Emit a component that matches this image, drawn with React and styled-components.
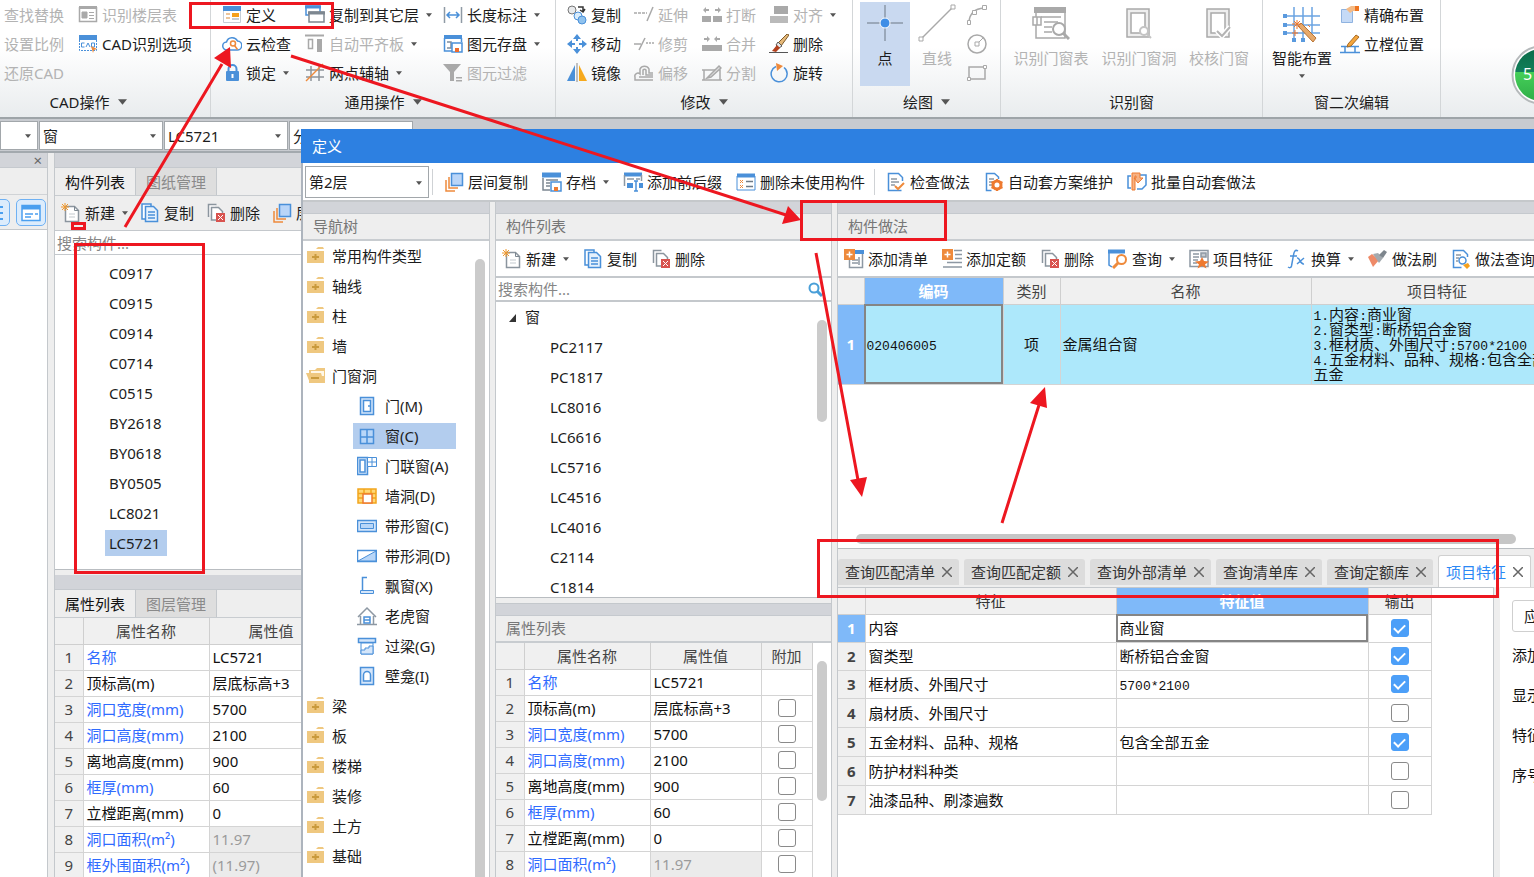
import React, { useState } from 'react';
import styled, { createGlobalStyle } from 'styled-components';

const azul = '#4a90d9';
const cinza = '#a9a9a9';
const laranja = '#ee8a3c';

/* ---------- icons, all drawn on a 20x20 grid ---------- */

const icons = {
    floorTable: <g fill="none" stroke={cinza}><path d="M1 2.500h18M1.500 2v14.500h17V2" strokeWidth="1.500"/><path d="M1 2.500h18" strokeWidth="3"/><path d="M4 7h5v6H4z" fill={cinza}/><path d="M11 7.500h5M11 10.500h5M11 13.500h5"/></g>,
    cad: <g><path d="M1 1h18v5H1z" fill={azul}/><path d="M1.500 6v10.500h17V6" fill="#fff" stroke={azul} strokeDasharray="2 1"/><path d="M6.500 9H3.500v4h3M8 13l2-4 2 4M13.500 9v4h3V9z" fill="none" stroke={azul}/><path d="M13 12l6 3-3 1-1 3z" fill={laranja}/></g>,
    define: <g><path d="M1.500 1.500h17v16h-17z" fill="#fff" stroke="#c5cdd6"/><path d="M1 1h18v5H1z" fill={azul}/><path d="M4 9h4M4 13h4" stroke="#e6b37b" strokeWidth="1.500"/><path d="M10 8h7v4h-7z" fill="#f5a01d"/><path d="M10 14h7" stroke="#c5cdd6" strokeWidth="2"/></g>,
    cloud: <g fill="none" stroke={azul} strokeWidth="1.500"><path d="M5 16a4 4 0 0 1-.5-8A6 6 0 0 1 15.500 7a4.500 4.500 0 0 1-.5 9z"/><g stroke={laranja}><circle cx="11" cy="9.500" r="2.500"/><path d="M12.500 11.500l3 4"/></g></g>,
    lock: <g><path d="M6.500 9V6a4 4 0 0 1 8 0v3" fill="none" stroke={azul} strokeWidth="2"/><rect x="4" y="8" width="13" height="10" rx="1" fill={azul}/><path d="M10.500 11v4" stroke="#fff" strokeWidth="2"/></g>,
    copyFloor: <g strokeWidth="1.500"><path d="M1 1h14v9H1z" fill="#fff" stroke={azul}/><path d="M0 2h16" stroke={azul} strokeWidth="3"/><path d="M4 7h15v10H4z" fill="#fff" stroke="#7d8790"/><path d="M3 8h17" stroke="#7d8790" strokeWidth="3"/></g>,
    align: <g fill="none" stroke={cinza}><path d="M0 1.500h19" strokeWidth="2"/><path d="M3.500 5.500h4v9h-4z" strokeWidth="1.500"/><path d="M12 5h5v13h-5z" fill={cinza} stroke="none"/></g>,
    axis: <g fill="none" stroke="#8d949a" strokeWidth="1.500"><path d="M6 3v15M14 3v15M1 7h18M1 14h18"/><path d="M1 18L18 1" stroke={laranja}/></g>,
    length: <g fill="none" stroke={azul} strokeWidth="1.500"><path d="M1.500 2v16M18.500 2v16" stroke="#8f9aa5"/><path d="M4 10h12M7 7l-3 3 3 3M13 7l3 3-3 3"/></g>,
    saveItem: <g fill="none" stroke={azul} strokeWidth="1.500"><path d="M1 3h18" strokeWidth="4"/><path d="M1.500 4v13H9M18.500 4v4"/><path d="M4 8h4v6H4" stroke="#7c8c9d"/><path d="M9 9h10v9H9z" fill="#fff"/><path d="M12 14h4v4h-4z" fill="#ee6b2c" stroke="none"/></g>,
    filter: <g fill={cinza}><path d="M0 1h18l-7 8v9H7V9z"/><path d="M13 14h6v1.500h-6zM13 17h6v1.500h-6z"/></g>,
    copy3: <g><circle cx="5" cy="5" r="4" fill="#e8eaec" stroke="#777"/><path d="M11 2h5v5M13 5l3 2 2-3" fill="none" stroke="#333" strokeWidth="1.500"/><circle cx="11" cy="11" r="4" fill="#d9ecfb" stroke={azul}/><circle cx="15" cy="15" r="4" fill="#8fc2ee" stroke={azul}/></g>,
    move: <g fill={azul}><path d="M10 0l4 5H6zM10 20l4-5H6zM0 10l5-4v8zM20 10l-5-4v8z"/><path d="M10 4v3M10 13v3M4 10h4M12 10h4" stroke={azul} strokeWidth="2"/></g>,
    mirror: <g><path d="M8 2v16H0z" fill={azul}/><path d="M12 2v16h8z" fill="#f6a91c"/><path d="M10 0v19" stroke="#888"/></g>,
    extend: <g stroke={cinza} strokeWidth="1.500"><path d="M0 8h13" strokeDasharray="3 1"/><path d="M13 16L19 2"/></g>,
    trim: <g stroke={cinza} strokeWidth="1.500"><path d="M0 10h7"/><path d="M5 16L11 4"/><path d="M12 9h8" strokeDasharray="2 1"/></g>,
    offset: <g fill="none" stroke={cinza} strokeWidth="1.500"><path d="M19 17H1v-3a3 3 0 0 1 5-3V6a5 5 0 0 1 9 0v4h4"/><path d="M19 14H5M9 12V7a2 2 0 0 1 3 0v5h7"/></g>,
    split: <g fill={cinza}><path d="M0 11h9v6H0zM11 11h9v6h-9z"/><path d="M1 5l3-3v2h3v2H4v2zM19 5l-3-3v2h-3v2h3v2z"/></g>,
    merge: <g fill={cinza}><path d="M0 11h10v6H0zM10 11h10v6H10z"/><path d="M8 5L5 2v2H2v2h3v2zM12 5l3-3v2h3v2h-3v2z"/></g>,
    divide: <g fill="none" stroke={cinza} strokeWidth="1.500"><path d="M2 7h16v10H2zM0 7h4M0 17h4M16 17h4"/><path d="M5 15L17 3l2 2L9 14z" fill="#ddd"/></g>,
    alignObj: <g fill={cinza}><path d="M5 1h14v8H5z"/><path d="M1 11h18v7H1z" opacity=".8"/></g>,
    brush: <g><path d="M20 1l-2-1L9 9l3 3z" fill="#e5b878" stroke="#7d5a2a"/><path d="M9 8l4 4-3 2-3-3z" fill="#e8e8e8" stroke="#555"/><path d="M8 11l3 3-4 4-4-1z" fill="#b3401d"/><path d="M0 18.500h19" stroke="#555"/></g>,
    rotate: <g fill="none" stroke={azul} strokeWidth="1.500"><path d="M7 3.500a8 8 0 1 0 8 1"/><path d="M7 0l7 3-6 5z" fill={laranja} stroke="none"/></g>,
    exact: <g><path d="M1.500 4.500h11v13h-11z" fill="#c5daf6" stroke="#8fb3e0"/><path d="M6 4l5-3h8v5h-6l-3 2z" fill="#f4bb86"/><path d="M15 1h4v5h-4z" fill="#ee7420"/></g>,
    frame: <g fill="none" stroke={azul} strokeWidth="1.500"><path d="M1 12.500h18M0 18.500h20M5 12v6M15 12v6"/><path d="M8 10L16 1l3 2-8 9-4 1z" fill="#f5a63c" stroke="#a76a24" strokeWidth="1"/></g>,
    newDoc: <g fill="none"><path d="M4.500 3.500h9l4 4v11h-13z" fill="#fff" stroke="#8b959e" strokeWidth="1.500"/><path d="M13.500 3.500v4h4" stroke="#7c8791"/><path d="M8 11h6M8 14h6" stroke="#c3c9ce"/><path d="M4 0v8M0 4h8M1 1l6 6M7 1L1 7" stroke="#f0982c"/></g>,
    copy: <g fill="#fff" stroke={azul} strokeWidth="1.500"><path d="M2 1h9v15H2z"/><path d="M5.500 3.500h8l4 4v11h-12z" fill="#e6f1fc"/><path d="M8 9h7M8 12h7M8 15h7"/></g>,
    del: <g fill="#fff"><path d="M2.500 14V1.500h8M5.500 17V4.500h7l4 4V17z" stroke="#8b959e" strokeWidth="1.500"/><path d="M10 10h9v9h-9z" fill="#d9534f"/><path d="M12 12l5 5M17 12l-5 5" stroke="#fff"/></g>,
    between: <g fill="none" strokeWidth="1.500"><path d="M7.500 1.500h11v12h-11z" fill="#b9d5f8" stroke={azul}/><path d="M5 5v11h9M2 8v11h9" stroke={laranja}/></g>,
    archive: <g fill="none" stroke={azul} strokeWidth="1.500"><path d="M0 3h19" strokeWidth="5"/><path d="M1 6v12h7M4 8h12M4 11h4M4 14h4" stroke="#7c8791"/><path d="M9 10h10v9H9z" fill="#fff"/><path d="M12 15h4v4h-4z" fill="#ee7a30" stroke="none"/></g>,
    suffix: <g fill="none" stroke={azul} strokeWidth="1.500"><path d="M1 2.500h18" strokeWidth="4"/><path d="M1.500 3v11M18.500 3v6M4 7h7M13 7h4" stroke="#8d98a3"/><path d="M4 11h6v5H4zM16 11h4v5h-4z" fill={azul} stroke="none"/><path d="M13 9v10M11 9h4M11 19h4"/></g>,
    unused: <g fill="none" stroke={azul} strokeWidth="1.500"><path d="M1 3.500h18" strokeWidth="4"/><path d="M1 4v14h18V4" strokeWidth="1"/><path d="M4 8l3 3M7 8l-3 3M4 13l3 3M7 13l-3 3" stroke={laranja} strokeWidth="1"/><path d="M10 9.500h7M10 14.500h7" stroke="#6d7a86"/></g>,
    check: <g fill="none" stroke={azul} strokeWidth="1.500"><path d="M16.500 9V5.500l-4-4h-10v17h13"/><path d="M5 7h6M5 10h8M5 13h4" stroke="#8d98a3"/><path d="M9 14l3 3 6-6" stroke={laranja} strokeWidth="2"/></g>,
    plan: <g fill="none" stroke={azul} strokeWidth="1.500"><path d="M14.500 7V5l-4-3.500h-8v17h5"/><path d="M5 7h5M5 10h4M5 13h3" stroke="#8d98a3"/><circle cx="13" cy="13" r="4" stroke="#ee7a30" strokeWidth="3"/><path d="M13 7v2M13 17v2M7.500 10l2 1M16.500 15l2 1M7.500 16l2-1M16.500 11l2-1" stroke="#ee7a30" strokeWidth="2"/></g>,
    batch: <g fill="none"><path d="M4 4H1v12h3M13 3h6v10l-4 4h-5" stroke={azul} strokeWidth="1.500"/><path d="M5 1h8v5h3l-5 5-4-5h2V4H8v14H5z" fill="#f6b183" stroke="#ee7a30"/></g>,
    addList: <g fill="none"><path d="M10 1h10v4H10z" fill={azul}/><path d="M18.500 5v13.500h-13V11M8 11h6M8 14h6M15 8v8" stroke="#8d98a3" strokeWidth="1.500"/><path d="M0 0h11v11H0z" fill={laranja}/><path d="M5.500 2.500v6M2.500 5.500h6" stroke="#fff" strokeWidth="1.500"/></g>,
    addQuota: <g fill="none"><path d="M12 1.500h8M13 5.500h7M13 9.500h7M5 13.500h15M1 18h19" stroke="#8d98a3" strokeWidth="1.500"/><path d="M0 0h11v11H0z" fill={laranja}/><path d="M5.500 2.500v6M2.500 5.500h6" stroke="#fff" strokeWidth="1.500"/></g>,
    query: <g fill="none" stroke={azul}><path d="M0 2.500h17" strokeWidth="4"/><path d="M1 4v12l3 2" strokeWidth="1.500"/><circle cx="13.500" cy="10.500" r="4.500" fill="#fff" stroke={laranja} strokeWidth="2"/><path d="M10 14l-5 5" stroke={laranja} strokeWidth="3"/></g>,
    feature: <g fill="none" stroke="#8d98a3" strokeWidth="1.500"><path d="M1 1.500h18v16H1z"/><path d="M4 5h6M4 8h6M4 11h5M4 14h4"/><path d="M12 4h5v4h-5z" fill="#c3c9ce"/><path d="M13 8l2 4 5 .500-4 3 1.500 4-4.500-2.500-4.500 2.500L10 15.500l-4-3 5-.5z" fill="#ee7a30" stroke="none"/></g>,
    fx: <g fill="none" stroke={azul} strokeWidth="1.500"><path d="M11 2c-3-2-4 1-4.500 4L4.500 17c-.5 2-2 2-3.500 1M3 7h7M10 9c3-1 3 7 7 6M17 9l-7 6"/></g>,
    paint: <g><path d="M0 8l4-3 7 6-6 7z" fill="#ee8a68"/><path d="M5 5l5-1 5 5-4 5z" fill="#a3a9ae"/><path d="M11 6l5-5 3 2-4 6z" fill="#7e868d"/></g>,
    queryDoc: <g fill="none" stroke={azul} strokeWidth="1.500"><path d="M16.500 8V5.500l-4-4h-10v17h8"/><path d="M5 6h5M5 9h3M5 12h2" stroke="#8d98a3"/><circle cx="11.500" cy="11.500" r="3.500"/><path d="M12 16l5-2 2 3-3 3z" fill="#f5a01d" stroke="none"/></g>,
    folder: <g><path d="M1 5h17v12H1z" fill="#efc880"/><path d="M10 3l2-2h5l1 2z" fill="#efc880"/><path d="M9.500 8v6M6 11h7" stroke="#c99a3c" strokeWidth="2"/></g>,
    folderOpen: <g><path d="M3 4h6l2-2h8v15H3z" fill="#efc880"/><path d="M5 5h13v5H5z" fill="#fff7e6"/><path d="M0 7h15l3 10H4z" fill="#efc880"/><path d="M5 12h8" stroke="#c99a3c" strokeWidth="2"/></g>,
    door: <g fill="#d5e6fa" stroke={azul} strokeWidth="1.500"><path d="M3.500 1.500h13v17h-13z"/><path d="M6.500 4.500h7v11h-7z" fill="#fff"/><path d="M12 9v2"/></g>,
    window: <g fill="#b8d6f8" stroke={azul} strokeWidth="1.500"><path d="M3.500 3.500h13v14h-13zM10 4v13M4 11h12"/></g>,
    doorWindow: <g fill="#d5e6fa" stroke={azul} strokeWidth="1.500"><path d="M.5 1.500h10v17H.5z"/><path d="M3 4h5v12H3z" fill="#fff"/><path d="M10.500 1.500h9v9h-9zM15 2v8M11 6h8" fill="#fff" strokeWidth="1"/></g>,
    hole: <g stroke="#f2a51d" strokeWidth="1.500"><path d="M1 3h18v14H1z" fill="#ffd877"/><path d="M1 7.500h18M1 12h18M7 3v4M14 3v4"/><path d="M6 8h9v9H6z" fill="#fff" stroke="#ee7a30"/></g>,
    stripWin: <g fill="#d5e6fa" stroke={azul}><path d="M.5 4.500h19v11H.5z" strokeWidth="1.500"/><path d="M3.500 7.500h13v5h-13z" fill="#b8d6f8"/></g>,
    stripHole: <g stroke={azul}><path d="M.5 4.500h19v11H.5z" fill="#fff" strokeWidth="1.500"/><path d="M1 15L19 5v10z" fill="#b8d6f8"/></g>,
    bay: <g fill="#d5e6fa" stroke={azul}><path d="M10 1.500H5.500v13" fill="none" strokeWidth="1.500"/><path d="M3.500 14.500h13v3h-13z"/></g>,
    dormer: <g fill="none" stroke="#8d98a3" strokeWidth="1.500"><path d="M1 11l9-9 9 9M3.500 10v8M16.500 10v8M0 18.500h20"/><path d="M7 11h6v6H7zM7 14h6" stroke={azul}/></g>,
    lintel: <g fill="#d5e6fa" stroke={azul}><path d="M1.500 2.500h17v4h-17z" strokeWidth="1.500"/><path d="M4 7h12v11H4z" fill="#fff"/><path d="M4 18v-4h4v-2h4v-2h4v8z"/></g>,
    niche: <g fill="#d5e6fa" stroke={azul} strokeWidth="1.500"><path d="M3.500 1.500h13v17h-13z"/><path d="M6.500 15V9a3.500 3.500 0 0 1 7 0v6z" fill="#fff"/></g>,
    search: <g fill="none" stroke="#4a9fd8" strokeWidth="2"><circle cx="8" cy="9" r="4.500"/><path d="M11 12l5 5" strokeWidth="3"/></g>,
    list: <g stroke="#4a9fef" strokeWidth="2"><path d="M2 4h16M2 10h16M2 16h16"/></g>,
    panel: <g fill="none" stroke="#4a9fef" strokeWidth="1.500"><path d="M1 2.500h18v15H1z" fill="#fff"/><path d="M1 4.500h18" strokeWidth="4"/><path d="M4 11h8M4 14h6M14 11h3"/></g>,
};

function Icon({ name }){
    return <Svg20 viewBox="0 0 20 20" aria-hidden="true">{icons[name]}</Svg20>;
}

function Seta({ big }){
    return <Caret $big={big} viewBox="0 0 8 5" aria-hidden="true"><path d="M0 0h8L4 5z" fill="#555"/></Caret>;
}

/* ---------- data ---------- */

const ribbonGroups = [
    { w: 211, pad: 4, label: 'CAD操作', arrow: true, end: 34, cols: [
        { items: [[null, '查找替换', true], [null, '设置比例', true], [null, '还原CAD', true]] },
        { gap: 14, items: [['floorTable', '识别楼层表', true], ['cad', 'CAD识别选项']] },
    ] },
    { w: 345, pad: 11, label: '通用操作', arrow: true, cols: [
        { items: [['define', '定义'], ['cloud', '云检查'], ['lock', '锁定', false, true]] },
        { gap: 14, items: [['copyFloor', '复制到其它层', false, true], ['align', '自动平齐板', true, true], ['axis', '两点辅轴', false, true]] },
        { gap: 11, items: [['length', '长度标注', false, true], ['saveItem', '图元存盘', false, true], ['filter', '图元过滤', true]] },
    ] },
    { w: 297, pad: 11, label: '修改', arrow: true, cols: [
        { items: [['copy3', '复制'], ['move', '移动'], ['mirror', '镜像']] },
        { gap: 13, items: [['extend', '延伸', true], ['trim', '修剪', true], ['offset', '偏移', true]] },
        { gap: 14, items: [['split', '打断', true], ['merge', '合并', true], ['divide', '分割', true]] },
        { gap: 13, items: [['alignObj', '对齐', true, true], ['brush', '删除'], ['rotate', '旋转']] },
    ] },
];

const leftItems = ['C0917', 'C0915', 'C0914', 'C0714', 'C0515', 'BY2618', 'BY0618', 'BY0505', 'LC8021', 'LC5721'];
const midItems = ['PC2117', 'PC1817', 'LC8016', 'LC6616', 'LC5716', 'LC4516', 'LC4016', 'C2114', 'C1814'];

const props = [
    ['名称', 'LC5721', true],
    ['顶标高(m)', '层底标高+3', false],
    ['洞口宽度(mm)', '5700', true],
    ['洞口高度(mm)', '2100', true],
    ['离地高度(mm)', '900', false],
    ['框厚(mm)', '60', true],
    ['立樘距离(mm)', '0', false],
    ['洞口面积(m²)', '11.97', true, true],
    ['框外围面积(m²)', '(11.97)', true, true],
];

const tree = [
    ['folder', '常用构件类型'], ['folder', '轴线'], ['folder', '柱'], ['folder', '墙'], ['folderOpen', '门窗洞'],
    ['door', '门(M)', true], ['window', '窗(C)', true], ['doorWindow', '门联窗(A)', true], ['hole', '墙洞(D)', true],
    ['stripWin', '带形窗(C)', true], ['stripHole', '带形洞(D)', true], ['bay', '飘窗(X)', true], ['dormer', '老虎窗', true],
    ['lintel', '过梁(G)', true], ['niche', '壁龛(I)', true],
    ['folder', '梁'], ['folder', '板'], ['folder', '楼梯'], ['folder', '装修'], ['folder', '土方'], ['folder', '基础'],
];

const features = [
    ['内容', '商业窗', true],
    ['窗类型', '断桥铝合金窗', true],
    ['框材质、外围尺寸', '5700*2100', true],
    ['扇材质、外围尺寸', '', false],
    ['五金材料、品种、规格', '包含全部五金', true],
    ['防护材料种类', '', false],
    ['油漆品种、刷漆遍数', '', false],
];

const queryTabs = ['查询匹配清单', '查询匹配定额', '查询外部清单', '查询清单库', '查询定额库'];

/* ---------- parts ---------- */

function Tool({ icon, text, arrow, off, tight }){
    return (
        <ToolButton type="button" disabled={off} $tight={tight}>
            {icon && <Icon name={icon} />}
            <span>{text}</span>
            {arrow && <Seta />}
        </ToolButton>
    );
}

function Ribbon(){
    return (
        <RibbonBar>
            {ribbonGroups.map(g => (
                <Group key={g.label} $w={g.w}>
                    <GroupBody $pad={g.pad}>
                        {g.cols.map((c, i) => (
                            <Column key={i} $gap={c.gap}>
                                {c.items.map(([icon, text, off, arrow]) => (
                                    <Tool key={text} icon={icon} text={text} off={off} arrow={arrow} tight />
                                ))}
                            </Column>
                        ))}
                    </GroupBody>
                    <GroupLabel $end={g.end}>{g.label}{g.arrow && <Seta big />}</GroupLabel>
                </Group>
            ))}
            <Group $w={148}>
                <GroupBody $pad={7}>
                    <BigButton type="button" $on $w={50}>
                        <BigSvg viewBox="0 0 38 38">
                            <path d="M19 1v36M1 19h36" stroke="#8b98a8" strokeWidth="1.500"/>
                            <circle cx="19" cy="19" r="5" fill="#3f8ee6" stroke="#fff"/>
                        </BigSvg>
                        点
                    </BigButton>
                    <BigButton type="button" disabled $w={54}>
                        <BigSvg viewBox="0 0 38 38">
                            <path d="M3 35L35 3" stroke={cinza} strokeWidth="1.500"/>
                            <path d="M1 33h4v4H1zM33 1h4v4h-4z" fill="#fff" stroke={cinza}/>
                        </BigSvg>
                        直线
                    </BigButton>
                    <Column $gap={3}>
                        <ToolButton type="button" disabled $tight aria-label="弧"><Svg20 viewBox="0 0 20 20"><path d="M2 17Q3 4 17 3" fill="none" stroke={cinza} strokeWidth="1.500"/><path d="M.5 15.500h3v4h-3zM5.500 5.500h4v4h-4zM15.500 .500h4v4h-4z" fill="#fff" stroke={cinza}/></Svg20></ToolButton>
                        <ToolButton type="button" disabled $tight aria-label="圆"><Svg20 viewBox="0 0 20 20"><circle cx="10" cy="10" r="9" fill="none" stroke={cinza} strokeWidth="1.500"/><path d="M8 8h4v4H8z" fill="#fff" stroke={cinza}/><path d="M12 8l4-4" stroke={cinza}/></Svg20></ToolButton>
                        <ToolButton type="button" disabled $tight aria-label="矩形"><Svg20 viewBox="0 0 20 20"><path d="M2 4h16v12H2z" fill="none" stroke={cinza} strokeWidth="1.500"/><path d="M.5 14.500h3v3h-3zM16.500 2.500h3v3h-3z" fill="#fff" stroke={cinza}/></Svg20></ToolButton>
                    </Column>
                </GroupBody>
                <GroupLabel>绘图<Seta big /></GroupLabel>
            </Group>
            <Group $w={262}>
                <GroupBody $pad={6}>
                    <BigButton type="button" disabled $w={88}>
                        <BigSvg viewBox="0 0 38 38">
                            <path d="M2 3h32v6H2z" fill={cinza}/>
                            <path d="M4 8v26h29V8M9 13h20M12 18h14M12 23h8M12 28h8" fill="none" stroke={cinza} strokeWidth="1.500"/>
                            <path d="M1 13h8v8H1zM5 13v8" fill="#fff" stroke={cinza} strokeWidth="1.500"/>
                            <circle cx="27" cy="25" r="6" fill="#fff" stroke={cinza} strokeWidth="2"/>
                            <path d="M31 29l6 6" stroke={cinza} strokeWidth="3"/>
                        </BigSvg>
                        识别门窗表
                    </BigButton>
                    <BigButton type="button" disabled $w={88}>
                        <BigSvg viewBox="0 0 38 38">
                            <path d="M7 5h22v28H7z" fill="#eee" stroke={cinza} strokeWidth="1.500"/>
                            <path d="M11 9h14v20H11z" fill="#fff" stroke={cinza} strokeWidth="1.500"/>
                            <circle cx="24" cy="27" r="4" fill="#fff" stroke="#c4c4c4" strokeWidth="2"/>
                            <path d="M27 30l4 4" stroke="#c4c4c4" strokeWidth="2"/>
                        </BigSvg>
                        识别门窗洞
                    </BigButton>
                    <BigButton type="button" disabled $w={72}>
                        <BigSvg viewBox="0 0 38 38">
                            <path d="M7 5h22v28H7z" fill="#eee" stroke={cinza} strokeWidth="1.500"/>
                            <path d="M11 9h14v20H11z" fill="#fff" stroke={cinza} strokeWidth="1.500"/>
                            <path d="M17 27l5 5 8-9" fill="none" stroke="#fff" strokeWidth="5"/>
                            <path d="M17 27l5 5 8-9" fill="none" stroke="#b4b4b4" strokeWidth="2"/>
                        </BigSvg>
                        校核门窗
                    </BigButton>
                </GroupBody>
                <GroupLabel>识别窗</GroupLabel>
            </Group>
            <Group $w={178}>
                <GroupBody $pad={5}>
                    <BigButton type="button" $w={68}>
                        <BigSvg viewBox="0 0 38 38">
                            <path d="M11 3v32M20 3v32M29 3v26M2 12h35M2 21h35M2 29h35" fill="none" stroke="#6ba4e2" strokeWidth="1.500"/>
                            <path d="M0 10h4v4H0zM0 19h4v4H0zM0 27h4v4H0zM9 34h4v4H9zM18 34h4v4h-4z" fill="#5a9ade"/>
                            <path d="M15 22l3-3 15 15-3 4z" fill="#e6a96b" stroke="#b87436"/>
                            <path d="M14 16v9M9 20h9M11 17l6 6M17 17l-6 6M12 26v6M9 29h6M25 21l2 2" stroke="#f0772b"/>
                        </BigSvg>
                        智能布置
                        <Seta />
                    </BigButton>
                    <Column $gap={4}>
                        <Tool icon="exact" text="精确布置" tight />
                        <Tool icon="frame" text="立樘位置" tight />
                    </Column>
                </GroupBody>
                <GroupLabel>窗二次编辑</GroupLabel>
            </Group>
        </RibbonBar>
    );
}

function PropTable({ extra, rows }){
    return (
        <Grade>
            <colgroup>
                <col width="28" />
                <col width="126" />
                <col width={extra ? 111 : 124} />
                {extra && <col width="51" />}
            </colgroup>
            <thead>
                <tr>
                    <th></th><th>属性名称</th><th>属性值</th>{extra && <th>附加</th>}
                </tr>
            </thead>
            <tbody>
                {rows.map(([nome, valor, link, ro], i) => (
                    <tr key={nome}>
                        <Num>{i + 1}</Num>
                        <Cell $blue={link}>{nome}</Cell>
                        <Cell $ro={ro}>{valor}</Cell>
                        {extra && <CheckCell>{i > 0 && <Check type="checkbox" aria-label={nome} />}</CheckCell>}
                    </tr>
                ))}
            </tbody>
        </Grade>
    );
}

function MainPanels(){
    return (
        <MainBody>
            <SidePane>
                <Strip><Close type="button" aria-label="关闭">×</Close></Strip>
                <SideHead />
                <SideTools>
                    <ViewButton type="button" aria-label="列表"><Icon name="list" /></ViewButton>
                    <ViewButton type="button" aria-label="面板"><Icon name="panel" /></ViewButton>
                </SideTools>
            </SidePane>
            <ListPane>
                <Strip />
                <PaneTabs>
                    <PaneTab type="button" $on>构件列表</PaneTab>
                    <PaneTab type="button">图纸管理</PaneTab>
                </PaneTabs>
                <Tools $gray>
                    <Tool icon="newDoc" text="新建" arrow />
                    <Tool icon="copy" text="复制" />
                    <Tool icon="del" text="删除" />
                    <Tool icon="between" text="层" />
                </Tools>
                <SearchBox><input type="text" placeholder="搜索构件..." aria-label="搜索构件" /></SearchBox>
                <CodeList $left={50}>
                    {leftItems.map(c => <li key={c}><Code $on={c === 'LC5721'}>{c}</Code></li>)}
                </CodeList>
                <Strip />
                <PaneTabs>
                    <PaneTab type="button" $on>属性列表</PaneTab>
                    <PaneTab type="button">图层管理</PaneTab>
                </PaneTabs>
                <PropTable rows={props} />
            </ListPane>
        </MainBody>
    );
}

function Features(){
    const [marks, setMarks] = useState(features.map(f => f[2]));

    function toggle(i){
        setMarks(marks.map((m, k) => (k === i ? !m : m)));
    }

    return (
        <FeatureTable>
            <colgroup>
                <col width="27" /><col width="251" /><col width="252" /><col width="63" />
            </colgroup>
            <thead>
                <tr><th></th><th>特征</th><HeadOn>特征值</HeadOn><th>输出</th></tr>
            </thead>
            <tbody>
                {features.map(([nome, valor], i) => (
                    <tr key={nome}>
                        <Num $bold $on={i === 0}>{i + 1}</Num>
                        <Cell>{nome}</Cell>
                        <Cell $focus={i === 0}>{valor.includes('*') ? <Mono>{valor}</Mono> : valor}</Cell>
                        <CheckCell><Check type="checkbox" aria-label={nome} checked={marks[i]} onChange={() => toggle(i)} /></CheckCell>
                    </tr>
                ))}
            </tbody>
        </FeatureTable>
    );
}

function DefineDialog(){
    return (
        <Dialog>
            <Title>定义</Title>
            <DialogTools>
                <Combo $w={124} $tall>
                    <select aria-label="楼层" defaultValue="第2层"><option>第2层</option></select>
                    <Seta />
                </Combo>
                <Divider />
                <Tool icon="between" text="层间复制" />
                <Tool icon="archive" text="存档" arrow />
                <Tool icon="suffix" text="添加前后缀" />
                <Tool icon="unused" text="删除未使用构件" />
                <Divider />
                <Tool icon="check" text="检查做法" />
                <Tool icon="plan" text="自动套方案维护" />
                <Tool icon="batch" text="批量自动套做法" />
            </DialogTools>
            <DialogBody>
                <Pane $w={187}>
                    <Strip $short />
                    <PaneHead>导航树</PaneHead>
                    <Scroller>
                        <Tree>
                            {tree.map(([icon, text, sub]) => (
                                <TreeRow key={text} $sub={sub} $on={text === '窗(C)'}>
                                    <span><Icon name={icon} />{text}</span>
                                </TreeRow>
                            ))}
                        </Tree>
                        <Track $top={18}><Thumb /></Track>
                    </Scroller>
                </Pane>
                <Pane $w={337}>
                    <Strip $short />
                    <PaneHead>构件列表</PaneHead>
                    <Tools>
                        <Tool icon="newDoc" text="新建" arrow />
                        <Tool icon="copy" text="复制" />
                        <Tool icon="del" text="删除" />
                    </Tools>
                    <SearchBox $boxed>
                        <input type="text" placeholder="搜索构件..." aria-label="搜索构件" />
                        <Icon name="search" />
                    </SearchBox>
                    <Scroller $h={296}>
                        <CodeList $left={50} $plain>
                            <li><Root><svg width="9" height="9" viewBox="0 0 9 9"><path d="M8 1v8H1z" fill="#333"/></svg>窗</Root></li>
                            {midItems.map(c => <li key={c}><Code>{c}</Code></li>)}
                        </CodeList>
                        <Track $top={18}><Thumb $h={102} /></Track>
                    </Scroller>
                    <LowerPane>
                        <Strip $short />
                        <PaneHead>属性列表</PaneHead>
                        <Scroller>
                            <PropTable extra rows={props.slice(0, 8)} />
                            <Track $top={18}><Thumb $h={140} /></Track>
                        </Scroller>
                    </LowerPane>
                </Pane>
                <WidePane>
                    <Strip $short />
                    <PaneHead>构件做法</PaneHead>
                    <Tools>
                        <Tool icon="addList" text="添加清单" />
                        <Tool icon="addQuota" text="添加定额" />
                        <Tool icon="del" text="删除" />
                        <Tool icon="query" text="查询" arrow />
                        <Tool icon="feature" text="项目特征" />
                        <Tool icon="fx" text="换算" arrow />
                        <Tool icon="paint" text="做法刷" />
                        <Tool icon="queryDoc" text="做法查询" />
                    </Tools>
                    <MethodArea>
                        <MethodTable>
                            <colgroup>
                                <col width="26" /><col width="139" /><col width="57" /><col width="251" /><col width="252" />
                            </colgroup>
                            <thead>
                                <tr><th></th><HeadOn>编码</HeadOn><th>类别</th><th>名称</th><th>项目特征</th></tr>
                            </thead>
                            <tbody>
                                <tr>
                                    <Num $bold $on>1</Num>
                                    <MethodCell $focus><Mono>020406005</Mono></MethodCell>
                                    <MethodCell $center>项</MethodCell>
                                    <MethodCell>金属组合窗</MethodCell>
                                    <MethodCell>
                                        <Mono>1.</Mono>内容<Mono>:</Mono>商业窗<br />
                                        <Mono>2.</Mono>窗类型<Mono>:</Mono>断桥铝合金窗<br />
                                        <Mono>3.</Mono>框材质、外围尺寸<Mono>:5700*2100</Mono><br />
                                        <Mono>4.</Mono>五金材料、品种、规格<Mono>:</Mono>包含全部<br />
                                        五金
                                    </MethodCell>
                                </tr>
                            </tbody>
                        </MethodTable>
                        <HThumb />
                    </MethodArea>
                    <Detail>
                        <QueryTabs>
                            {queryTabs.map(t => (
                                <QueryTab key={t} type="button">{t}<Xis /></QueryTab>
                            ))}
                            <QueryTab type="button" $on>项目特征<Xis /></QueryTab>
                        </QueryTabs>
                        <DetailBody>
                            <FeatureBox><Features /></FeatureBox>
                            <Options>
                                <OptionButton type="button">应</OptionButton>
                                <p>添加</p>
                                <p>显示</p>
                                <p>特征</p>
                                <p>序号</p>
                            </Options>
                        </DetailBody>
                    </Detail>
                </WidePane>
            </DialogBody>
        </Dialog>
    );
}

function Xis(){
    return <svg width="10" height="10" viewBox="0 0 10 10" aria-hidden="true"><path d="M0 0l10 10M10 0L0 10" stroke="#666" strokeWidth="1.500"/></svg>;
}

/* red boxes and arrows that lie over the whole screen */
function Marks(){
    return (
        <Overlay aria-hidden="true">
            <g fill="none" stroke="#ed1720" strokeWidth="3">
                <rect x="190.500" y="3.500" width="142" height="24" />
                <rect x="75.500" y="244.500" width="128" height="328" />
                <rect x="72.500" y="223.500" width="12" height="5" />
                <rect x="801.500" y="201.500" width="144" height="38" />
                <rect x="818.500" y="540.500" width="679" height="56" />
                <path d="M125 227L222 64M291 56L786 215M816 253L858 480M1002 523L1039 405" />
            </g>
            <path d="M230 47L214 58L231 68zM801 220L788 206L782 224zM862 497L850 480L867 477zM1045 387L1030 403L1047 408z" fill="#ed1720" />
        </Overlay>
    );
}

export default function App(){
    return (
        <Tela>
            <Global />
            <Ribbon />
            <ComboRow>
                <Combo $w={38}><select aria-label="楼层"><option></option></select><Seta /></Combo>
                <Combo $w={124}><select aria-label="类别"><option>窗</option></select><Seta /></Combo>
                <Combo $w={124}><select aria-label="构件"><option>LC5721</option></select><Seta /></Combo>
                <Combo $w={124}><select aria-label="分层"><option>分层1</option></select></Combo>
            </ComboRow>
            <MainPanels />
            <Badge viewBox="0 0 60 60">
                <defs>
                    <linearGradient id="bola" x1="0" y1="0" x2="0" y2="1">
                        <stop offset="0" stopColor="#0b6b4a" /><stop offset=".45" stopColor="#12805a" />
                        <stop offset=".45" stopColor="#45cf58" /><stop offset="1" stopColor="#2fae48" />
                    </linearGradient>
                </defs>
                <circle cx="30" cy="30" r="28.500" fill="#fff" stroke="#b5b9bb" strokeWidth="2" />
                <circle cx="30" cy="30" r="26" fill="url(#bola)" />
                <text x="12" y="35" fill="#fff" fontSize="16">5</text>
            </Badge>
            <DefineDialog />
            <Marks />
        </Tela>
    );
}

const Global = createGlobalStyle`
    *{
        box-sizing: border-box;
    }
    body{
        margin: 0;
        font-family: "Noto Sans", "Noto Sans CJK SC", sans-serif;
        font-size: 15px;
        line-height: 20px;
        color: #1c1c1c;
    }
    button, input, select{
        font: inherit;
        color: inherit;
        margin: 0;
    }
    p, ul{
        margin: 0;
        padding: 0;
        list-style: none;
    }
`;
const Tela = styled.div`
    position: relative;
    display: flex;
    flex-direction: column;
    height: 100vh;
    overflow: hidden;
    background-color: white;
`;
const Svg20 = styled.svg`
    width: 20px;
    height: 20px;
    flex: none;
`;
const Caret = styled.svg`
    width: ${props => props.$big ? '9px' : '6px'};
    height: ${props => props.$big ? '6px' : '4px'};
    flex: none;
`;
const ToolButton = styled.button`
    display: flex;
    align-items: center;
    gap: 4px;
    height: ${props => props.$tight ? '29px' : '32px'};
    padding: ${props => props.$tight ? '0' : '0 6px'};
    border: none;
    background: none;
    white-space: nowrap;
    flex: none;
    ${Caret}{
        margin-left: 3px;
    }
    &:disabled{
        color: #b3b3b3;
    }
`;
const RibbonBar = styled.header`
    display: flex;
    flex: none;
    height: 119px;
    background: linear-gradient(white 40%, #e9ecee);
    border-bottom: 2px solid #9ea4a8;
`;
const Group = styled.section`
    display: flex;
    flex-direction: column;
    justify-content: space-between;
    flex: none;
    width: ${props => props.$w}px;
    border-right: 1px solid #d3d6d8;
    padding-bottom: 5px;
`;
const GroupBody = styled.div`
    display: flex;
    padding-left: ${props => props.$pad}px;
`;
const Column = styled.div`
    display: flex;
    flex-direction: column;
    margin-left: ${props => props.$gap || 0}px;
`;
const GroupLabel = styled.div`
    display: flex;
    align-items: center;
    justify-content: center;
    gap: 8px;
    padding-right: ${props => props.$end || 0}px;
`;
const BigButton = styled.button`
    display: flex;
    flex-direction: column;
    align-items: center;
    width: ${props => props.$w}px;
    height: 84px;
    margin-top: 2px;
    padding: 2px 0 0;
    gap: 6px;
    border: none;
    white-space: nowrap;
    background-color: ${props => props.$on ? '#c9d9f0' : 'transparent'};
    &:disabled{
        color: #b3b3b3;
    }
`;
const BigSvg = styled.svg`
    width: 38px;
    height: 38px;
    flex: none;
`;
const ComboRow = styled.div`
    display: flex;
    flex: none;
    gap: 1px;
    height: 34px;
    padding-top: 2px;
    background-color: #c8cbd0;
    border-bottom: 2px solid #a3a9ae;
`;
const Combo = styled.label`
    position: relative;
    width: ${props => props.$w}px;
    height: ${props => props.$tall ? '32px' : '29px'};
    select{
        width: 100%;
        height: 100%;
        padding: 0 3px;
        appearance: none;
        border: 1px solid #a2a7ab;
        border-radius: 0;
        background-color: white;
    }
    svg{
        position: absolute;
        right: 7px;
        top: ${props => props.$tall ? '15px' : '13px'};
        pointer-events: none;
    }
`;
const MainBody = styled.main`
    display: flex;
    flex: 1;
    min-height: 0;
    gap: 6px;
    background-color: #eeeeee;
`;
const SidePane = styled.aside`
    width: 48px;
    flex: none;
    background-color: white;
    border-right: 1px solid #c4c8cc;
`;
const Strip = styled.div`
    display: flex;
    justify-content: flex-end;
    align-items: center;
    flex: none;
    height: ${props => props.$short ? '12px' : '15px'};
    padding-right: 5px;
    background-color: #d2d4d9;
    border-bottom: 1px solid #c5c9ce;
`;
const Close = styled.button`
    padding: 0;
    border: none;
    background: none;
    line-height: 14px;
    color: #666;
`;
const SideHead = styled.div`
    height: 27px;
    background-color: #eeeeee;
    border-bottom: 1px solid #d0d3d6;
`;
const SideTools = styled.div`
    display: flex;
    justify-content: flex-end;
    gap: 6px;
    padding: 4px 1px 3px;
    background-color: #eeeeee;
    border-bottom: 1px solid #c4c8cc;
`;
const ViewButton = styled.button`
    display: flex;
    align-items: center;
    justify-content: center;
    width: 30px;
    height: 27px;
    flex: none;
    padding: 0;
    border: 1px solid #6fb1f3;
    border-radius: 5px;
    background-color: #dcecfc;
`;
const ListPane = styled.section`
    width: 247px;
    flex: none;
    overflow: hidden;
    border-left: 1px solid #c4c8cc;
`;
const PaneTabs = styled.div`
    display: flex;
    height: 28px;
    background-color: #eeeeee;
    border-bottom: 1px solid #c8ccd0;
`;
const PaneTab = styled.button`
    width: 81px;
    padding: 0;
    border: none;
    border-right: 1px solid #c4c8cc;
    background-color: ${props => props.$on ? '#eeeeee' : '#dedede'};
    color: ${props => props.$on ? '#111' : '#8a8a8a'};
`;
const Tools = styled.div`
    display: flex;
    align-items: center;
    flex: none;
    height: ${props => props.$gray ? '34px' : '35px'};
    background-color: ${props => props.$gray ? '#eeeeee' : 'white'};
    ${ToolButton} + ${ToolButton}{
        margin-left: ${props => props.$gray ? '0' : '2px'};
    }
`;
const SearchBox = styled.div`
    display: flex;
    align-items: center;
    flex: none;
    height: ${props => props.$boxed ? '26px' : '25px'};
    padding-right: 5px;
    background-color: white;
    border-top: ${props => props.$boxed ? '2px' : '1px'} solid #c4c8cc;
    border-bottom: ${props => props.$boxed ? '2px' : '1px'} solid #c4c8cc;
    input{
        flex: 1;
        min-width: 0;
        padding: 0 2px;
        border: none;
        outline: none;
        background: none;
    }
    input::placeholder{
        color: #868686;
    }
`;
const CodeList = styled.ul`
    flex: 1;
    padding: ${props => props.$plain ? '0' : '3px 0 11px'};
    margin-bottom: ${props => props.$plain ? '0' : '5px'};
    padding-left: ${props => props.$left}px;
    background-color: white;
    border-bottom: ${props => props.$plain ? 'none' : '1px solid #b9bdc1'};
    li{
        display: flex;
        align-items: center;
        height: 30px;
    }
`;
const Code = styled.span`
    padding: 3px 7px 3px 4px;
    background-color: ${props => props.$on ? '#b3cdee' : 'transparent'};
`;
const Root = styled.span`
    display: flex;
    align-items: center;
    gap: 8px;
    margin-left: -38px;
`;
const Grade = styled.table`
    table-layout: fixed;
    border-collapse: collapse;
    width: 0;
    flex: none;
    background-color: white;
    th{
        height: 26px;
        padding: 0;
        font-weight: 400;
        color: #444;
        background-color: #f0f0f0;
        border: 1px solid #cfcfcf;
        border-top: none;
        border-left: none;
    }
    tbody tr{
        height: 26px;
    }
    td{
        border: 1px solid #d4d4d4;
        border-left: none;
        white-space: nowrap;
        overflow: hidden;
    }
`;
const FeatureTable = styled(Grade)`
    th{
        color: #333;
    }
    tbody tr{
        height: 28px;
    }
    tbody tr:nth-child(n+4){
        height: 29px;
    }
`;
const MethodTable = styled(Grade)`
    tbody tr{
        height: 80px;
    }
`;
const Num = styled.td`
    padding: 0;
    text-align: center;
    font-weight: ${props => props.$bold ? 700 : 400};
    color: ${props => props.$on ? 'white' : '#444'};
    background-color: ${props => props.$on ? '#7fb9f9' : '#f0f0f0'};
`;
const Cell = styled.td`
    padding: 0 3px;
    color: ${props => props.$blue ? '#2f6bff' : props.$ro ? '#9b9b9b' : '#111'};
    background-color: ${props => props.$ro ? '#ebebeb' : 'white'};
    outline: ${props => props.$focus ? '2px solid #858585' : 'none'};
    outline-offset: -2px;
`;
const CheckCell = styled.td`
    padding: 0;
    text-align: center;
`;
const Check = styled.input`
    display: block;
    width: 18px;
    height: 18px;
    margin: 0 auto;
    appearance: none;
    border: 1px solid #8a8a8a;
    border-radius: 3px;
    background-color: white;
    &:checked{
        border-color: #4c9ff8;
        background-color: #4c9ff8;
    }
    &:checked::before{
        content: '';
        display: block;
        width: 9px;
        height: 5px;
        margin: 4px auto 0;
        border-left: 2px solid white;
        border-bottom: 2px solid white;
        transform: rotate(-45deg);
    }
`;
const HeadOn = styled.th`
    && {
        color: white;
        font-weight: 700;
        background-color: #7fb9f9;
    }
`;
const Mono = styled.span`
    font-family: "Liberation Mono", monospace;
    font-size: 13px;
    line-height: 0;
`;
const MethodCell = styled.td`
    padding: 0 2px;
    line-height: 15px;
    color: #111;
    text-align: ${props => props.$center ? 'center' : 'left'};
    background-color: #ade8fb;
    outline: ${props => props.$focus ? '2px solid #858585' : 'none'};
    outline-offset: -2px;
`;
const Dialog = styled.section`
    position: absolute;
    left: 301px;
    top: 129px;
    right: 0;
    bottom: 0;
    display: flex;
    flex-direction: column;
    background-color: #eeeeee;
    border-left: 2px solid #adb4bd;
`;
const Title = styled.h1`
    flex: none;
    margin: 0 0 0 -2px;
    height: 34px;
    padding-left: 11px;
    font-size: 15px;
    font-weight: 400;
    line-height: 34px;
    color: white;
    background-color: #2d80e1;
`;
const DialogTools = styled.div`
    display: flex;
    align-items: center;
    flex: none;
    height: 39px;
    padding-left: 2px;
    background-color: white;
    border-bottom: 2px solid #c5c8cb;
    ${ToolButton} + ${ToolButton}{
        margin-left: 2px;
    }
`;
const Divider = styled.i`
    width: 1px;
    height: 26px;
    margin: 0 5px 0 3px;
    background-color: #cfd2d5;
`;
const DialogBody = styled.div`
    display: flex;
    flex: 1;
    min-height: 0;
    gap: 5px;
`;
const Pane = styled.section`
    display: flex;
    flex-direction: column;
    flex: none;
    width: ${props => props.$w}px;
    border-right: 1px solid #c4c8cc;
    & + &{
        border-left: 1px solid #c4c8cc;
    }
`;
const WidePane = styled.section`
    display: flex;
    flex-direction: column;
    flex: 1;
    min-width: 0;
    border-left: 1px solid #c4c8cc;
`;
const PaneHead = styled.h2`
    flex: none;
    height: 27px;
    margin: 0;
    padding-left: 10px;
    font-size: 15px;
    font-weight: 400;
    line-height: 24px;
    color: #777;
    border-bottom: 2px solid #c8ccd0;
`;
const Scroller = styled.div`
    display: flex;
    justify-content: space-between;
    flex: ${props => props.$h ? '0 0 ' + props.$h + 'px' : '1'};
    min-height: 0;
    overflow: hidden;
    background-color: white;
    border-bottom: ${props => props.$h ? '1px solid #b9bdc1' : 'none'};
`;
const Track = styled.div`
    display: flex;
    flex-direction: column;
    flex: none;
    width: 14px;
    padding-top: ${props => props.$top}px;
`;
const Thumb = styled.div`
    width: 10px;
    border-radius: 5px;
    background-color: #cbcbcb;
    ${props => props.$h ? 'height: ' + props.$h + 'px;' : 'flex: 1; border-radius: 5px 5px 0 0;'}
`;
const Tree = styled.ul`
    flex: 1;
`;
const TreeRow = styled.li`
    display: flex;
    align-items: center;
    height: 30px;
    padding-left: ${props => props.$sub ? '50px' : '0'};
    span{
        display: flex;
        align-items: center;
        gap: ${props => props.$sub ? '8px' : '6px'};
        height: 26px;
        width: ${props => props.$on ? '103px' : 'auto'};
        padding-left: ${props => props.$sub ? '4px' : '3px'};
        background-color: ${props => props.$on ? '#b3cdee' : 'transparent'};
    }
`;
const LowerPane = styled.div`
    display: flex;
    flex-direction: column;
    flex: 1;
    min-height: 0;
    margin-top: 5px;
    border-top: 1px solid #c4c8cc;
`;
const MethodArea = styled.div`
    display: flex;
    flex-direction: column;
    justify-content: space-between;
    flex: 1;
    min-height: 0;
    overflow: hidden;
    background-color: white;
    border-top: 2px solid #c4c8cc;
    border-bottom: 1px solid #b9bdc1;
`;
const HThumb = styled.div`
    height: 10px;
    flex: none;
    margin: 0 18px 4px;
    border-radius: 5px;
    background-color: #c6c6c6;
`;
const Detail = styled.div`
    display: flex;
    flex-direction: column;
    flex: 0 0 328px;
    overflow: hidden;
`;
const QueryTabs = styled.div`
    display: flex;
    align-items: flex-end;
    gap: 5px;
    height: 38px;
    padding-top: 6px;
`;
const QueryTab = styled.button`
    display: flex;
    align-items: center;
    gap: 7px;
    height: ${props => props.$on ? '32px' : '26px'};
    margin-bottom: ${props => props.$on ? '0' : '2px'};
    padding: 0 7px;
    flex: none;
    border: ${props => props.$on ? '1px solid #d0d0d0' : 'none'};
    border-bottom: none;
    border-radius: 3px 3px 0 0;
    color: ${props => props.$on ? '#2b88f5' : '#333'};
    background-color: ${props => props.$on ? 'white' : '#dcdcdc'};
`;
const DetailBody = styled.div`
    display: flex;
    flex: 1;
    min-height: 0;
    gap: 6px;
`;
const FeatureBox = styled.div`
    flex: 1;
    background-color: white;
    border: 1px solid #c4c8cc;
    border-left: none;
    border-bottom: none;
`;
const Options = styled.div`
    width: 34px;
    flex: none;
    overflow: hidden;
    padding: 12px 0 0 12px;
    white-space: nowrap;
    background-color: white;
    border-top: 1px solid #d9d9d9;
    p{
        height: 40px;
        line-height: 38px;
        color: #111;
    }
`;
const OptionButton = styled.button`
    display: block;
    height: 32px;
    margin-bottom: 4px;
    padding: 0 11px;
    border: 1px solid #cfcfcf;
    border-radius: 3px;
    background-color: white;
`;
const Badge = styled.svg`
    position: absolute;
    right: -37px;
    top: 45px;
    width: 60px;
    height: 60px;
`;
const Overlay = styled.svg`
    position: absolute;
    left: 0;
    top: 0;
    width: 100%;
    height: 100%;
    pointer-events: none;
`;
